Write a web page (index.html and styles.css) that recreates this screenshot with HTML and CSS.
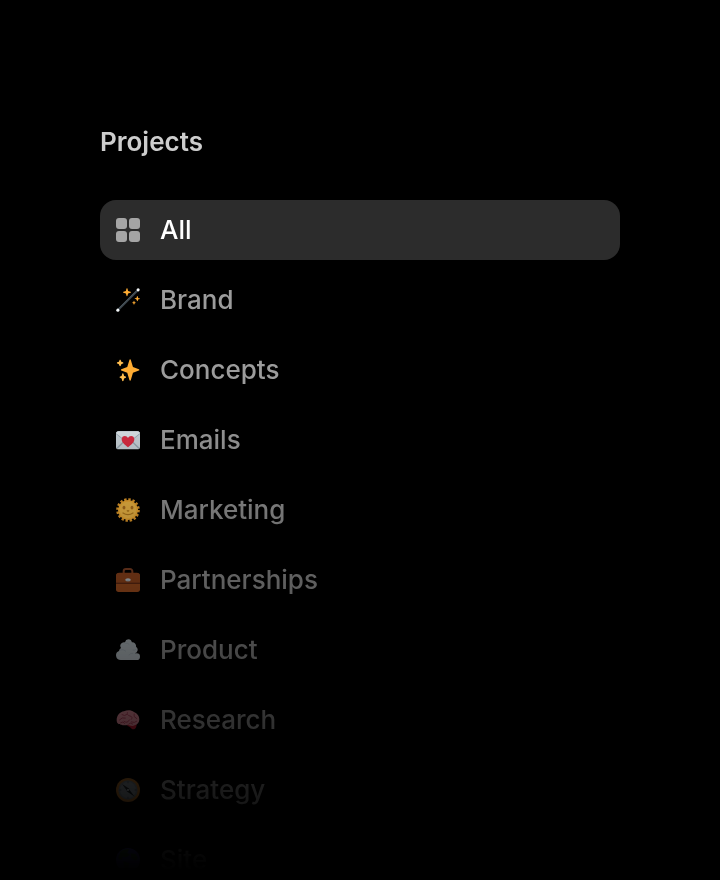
FILE: index.html
```html
<!DOCTYPE html>
<html lang="en">
<head>
<meta charset="utf-8">
<meta name="viewport" content="width=device-width, initial-scale=1">
<title>Projects</title>
<link rel="stylesheet" href="styles.css">
</head>
<body>
<nav class="sidebar" aria-labelledby="projects-title">
  <h2 class="title" id="projects-title">Projects</h2>
  <ul class="list">
    <li><a class="item active" href="#all" aria-current="page">
      <svg class="icon" viewBox="0 0 24 24" fill="#a5a5a5" aria-hidden="true"><rect width="11" height="11" rx="3"/><rect x="13" width="11" height="11" rx="3"/><rect y="13" width="11" height="11" rx="3"/><rect x="13" y="13" width="11" height="11" rx="3"/></svg>
      <span>All</span></a></li>
    <li><a class="item" href="#brand">
      <svg class="icon" viewBox="0 0 36 36" aria-hidden="true"><path d="M3 33 33 3" stroke="#3a434a" stroke-width="3.2" stroke-linecap="round"/><path d="M4 31 31 4" stroke="#5c6973" stroke-width="1"/><g fill="#f5f8fa"><circle cx="2.800" cy="33.200" r="2.300"/><circle cx="33.200" cy="2.800" r="2.300"/></g><path fill="#ffac33" d="M16.500 0c.8 0 1.300 4 1.800 4.500s4.200 1 4.200 1.900-3.700 1.400-4.200 1.900-1 4.200-1.800 4.200-1.300-3.700-1.800-4.200-4.200-1-4.200-1.900 3.700-1.400 4.200-1.900S15.700 0 16.500 0zM32 12c.6 0 .9 2.500 1.300 2.900s2.700.6 2.700 1.100-2.400.8-2.700 1.200-.7 2.800-1.300 2.800-.9-2.400-1.300-2.800-2.700-.7-2.700-1.200 2.400-.7 2.700-1.100.7-2.900 1.300-2.900zM27 19c.5 0 .8 1.900 1.100 2.200s1.900.4 1.900.9-1.600.6-1.900.9-.6 2-1.100 2-.8-1.700-1.100-2-1.900-.4-1.900-.9 1.600-.6 1.900-.9.600-2.200 1.100-2.200z"/></svg>
      <span>Brand</span></a></li>
    <li><a class="item" href="#concepts">
      <svg class="icon" viewBox="0 0 36 36" aria-hidden="true"><path fill="#ffac33" d="M34.347 16.893l-8.899-3.294-3.323-10.891c-.128-.42-.517-.708-.956-.708-.439 0-.828.288-.956.708l-3.322 10.891-8.900 3.294c-.393.146-.653.519-.653.938 0 .418.260.793.653.938l8.895 3.293 3.324 11.223c.126.424.516.715.959.715.442 0 .833-.291.959-.716l3.324-11.223 8.896-3.293c.391-.144.652-.518.652-.937 0-.418-.261-.792-.653-.938z"/><path fill="#ffbd4f" d="M14.469 27.894l-2.314-.856-.9-3.300c-.118-.436-.513-.738-.964-.738-.451 0-.846.302-.965.737l-.9 3.300-2.313.856c-.393.146-.653.520-.653.938 0 .418.260.793.653.938l2.301.853.907 3.622c.112.444.511.756.970.756.459 0 .858-.312.970-.757l.907-3.622 2.301-.853c.393-.144.653-.519.653-.937 0-.418-.260-.792-.653-.937zM10.345 6.463l-2.365-.875-.876-2.365c-.146-.393-.520-.653-.938-.653-.418 0-.792.260-.938.653l-.875 2.365-2.365.875c-.393.146-.653.520-.653.938 0 .418.260.793.653.938l2.365.875.875 2.365c.146.393.520.653.938.653.418 0 .792-.260.938-.653l.875-2.365 2.365-.875c.393-.146.653-.520.653-.938 0-.418-.260-.792-.652-.938z"/></svg>
      <span>Concepts</span></a></li>
    <li><a class="item" href="#emails">
      <svg class="icon" viewBox="0 0 36 36" aria-hidden="true"><rect y="5" width="36" height="27" rx="4" fill="#ccd6dd"/><path d="M1.200 30.800 13 19M34.800 30.800 23 19" stroke="#99aab5" stroke-width="2"/><path d="M4 5h28a4 4 0 0 1 4 4L20.500 21.500a4 4 0 0 1-5 0L0 9a4 4 0 0 1 4-4z" fill="#99aab5"/><path d="M4 5h28c2 0 3.500 1.300 3.900 3L20.500 20a4 4 0 0 1-5 0L.1 8C.5 6.300 2 5 4 5z" fill="#e1e8ed"/><path fill="#dd2e44" d="M27.500 17c0-3.200-2.200-5-4.800-5-2 0-3.800 1.200-4.700 3-.9-1.800-2.700-3-4.700-3-2.600 0-4.800 1.800-4.800 5 0 5.300 5.700 9 9.500 11.800 3.800-2.800 9.500-6.500 9.500-11.800z"/></svg>
      <span>Emails</span></a></li>
    <li><a class="item" href="#marketing">
      <svg class="icon" viewBox="0 0 36 36" aria-hidden="true"><circle cx="18" cy="18" r="15.500" fill="none" stroke="#f4a52c" stroke-width="4.500" stroke-dasharray="3.500 2.587"/><circle cx="18" cy="18" r="15" fill="#ffb636"/><circle cx="18" cy="18" r="12.500" fill="#ffc349"/><g fill="#b7761f"><ellipse cx="12" cy="14.500" rx="2.200" ry="2.700"/><ellipse cx="24" cy="14.500" rx="2.200" ry="2.700"/></g><path d="M10.500 22.500q7.500 5 15 0M17 19q1 1 2 0" fill="none" stroke="#c1831f" stroke-width="2" stroke-linecap="round"/></svg>
      <span>Marketing</span></a></li>
    <li><a class="item" href="#partnerships">
      <svg class="icon" viewBox="0 0 36 36" aria-hidden="true"><path d="M11.500 8V5a3.500 3.500 0 0 1 3.500-3.500h6A3.500 3.500 0 0 1 24.500 5v3" fill="none" stroke="#8a4526" stroke-width="3"/><rect y="8" width="36" height="28" rx="4" fill="#aa5320"/><path d="M0 12a5 5 0 0 1 5-5h26a5 5 0 0 1 5 5v10H0z" fill="#9c4a1e"/><path d="M0 22h36v1.800H0z" fill="#5f2813"/><ellipse cx="18" cy="17.500" rx="4.200" ry="2.300" fill="#ccd6dd"/><path d="M15.500 19.500h5" stroke="#8899a6"/></svg>
      <span>Partnerships</span></a></li>
    <li><a class="item" href="#product">
      <svg class="icon" viewBox="0 0 36 36" aria-hidden="true"><path fill="#cbd5db" d="M28 23h3a5 5 0 0 1 0 10H7A7 7 0 0 1 4.500 19.500 6 6 0 0 1 7.500 15 5.500 5.500 0 0 1 13.500 6.500 5.500 5.500 0 0 1 18.500 2a5.500 5.500 0 0 1 5.300 4.500A5.500 5.500 0 0 1 30 13a5.500 5.500 0 0 1-2 10z"/><path d="M6 18q5-2 9 2M14 8q4-1 6 2M25 18q3 1 5-1M19 26q3-4 7-3" fill="none" stroke="#b5c2ca" stroke-width="1.200"/></svg>
      <span>Product</span></a></li>
    <li><a class="item" href="#research">
      <svg class="icon" viewBox="0 0 36 36" aria-hidden="true"><path fill="#be1931" d="M17 24c3-3 11-4 14-1 0 5-1 9-5 9-3 0-4-4-9-5z"/><path fill="#ea91a0" d="M1 18C1 11 6 6 12 5c5-2.500 11-2 15 1 5 2 8 6 8 11 0 5-3 8-7 9-4 2-8 0-10-1-4 1.500-8 1-10 0-4 0-7-2-7-7z"/><path d="M5 18q4-5 9-3M9 10q4 3 7 0M17 7q-1 4 4 5t2 5M27 9q-2 4 4 7M12 20q5 4 8-2M23 21q5 2 8-1M7 22q4-3 6 1M19 24q2-3 6 0" fill="none" stroke="#b9435f" stroke-width="1.400" stroke-linecap="round"/></svg>
      <span>Research</span></a></li>
    <li><a class="item" href="#strategy">
      <svg class="icon" viewBox="0 0 36 36" aria-hidden="true"><circle cx="18" cy="18" r="18" fill="#c97d2d"/><circle cx="18" cy="18" r="14.500" fill="#7f8a94"/><circle cx="18" cy="18" r="12" fill="#98a2aa"/><path d="M18 5v3M18 28v3M5 18h3M28 18h3" stroke="#66757f" stroke-width="2"/><path fill="#292f33" d="m9 9 11 7-3 4z"/><path fill="#20272c" d="m28 28-12-8 3-4z"/><circle cx="18" cy="18" r="1.500" fill="#ccd6dd"/></svg>
      <span>Strategy</span></a></li>
    <li><a class="item" href="#site">
      <svg class="icon" viewBox="0 0 36 36" aria-hidden="true"><circle cx="18" cy="18" r="18" fill="#5145ed"/><path fill="#3f7c42" d="M7 5q7-5 13-3l-3 5 4 3-5 4-6-1-2 5-5-3zM22 8l7 1 4 6-4 4-6-4zM11 20l9 3-2 8-5 3z"/></svg>
      <span>Site</span></a></li>
  </ul>
</nav>
</body>
</html>
```
FILE: styles.css
```css
* { box-sizing: border-box; }

body {
  margin: 0;
  background: #000;
  font-family: Inter, "Liberation Sans", sans-serif;
  font-size: 26px;
  line-height: 44px;
}

.sidebar {
  height: 100vh;
  padding: 120px 100px 0;
  overflow: hidden;
  mask-image: linear-gradient(#000 45%, transparent 99%);
}

.title {
  margin: 0 0 36px;
  color: #cdcdcd;
  font-size: 26px;
  font-weight: 600;
}

.list {
  display: flex;
  flex-direction: column;
  gap: 10px;
  margin: 0;
  padding: 0;
  list-style: none;
}

.item {
  display: flex;
  align-items: center;
  gap: 20px;
  padding: 8px 16px;
  border-radius: 16px;
  color: #9c9c9c;
  font-weight: 500;
  text-decoration: none;
}

.active {
  background: #2c2c2c;
  color: #fff;
}

.icon {
  flex: none;
  width: 24px;
  height: 24px;
}
```
